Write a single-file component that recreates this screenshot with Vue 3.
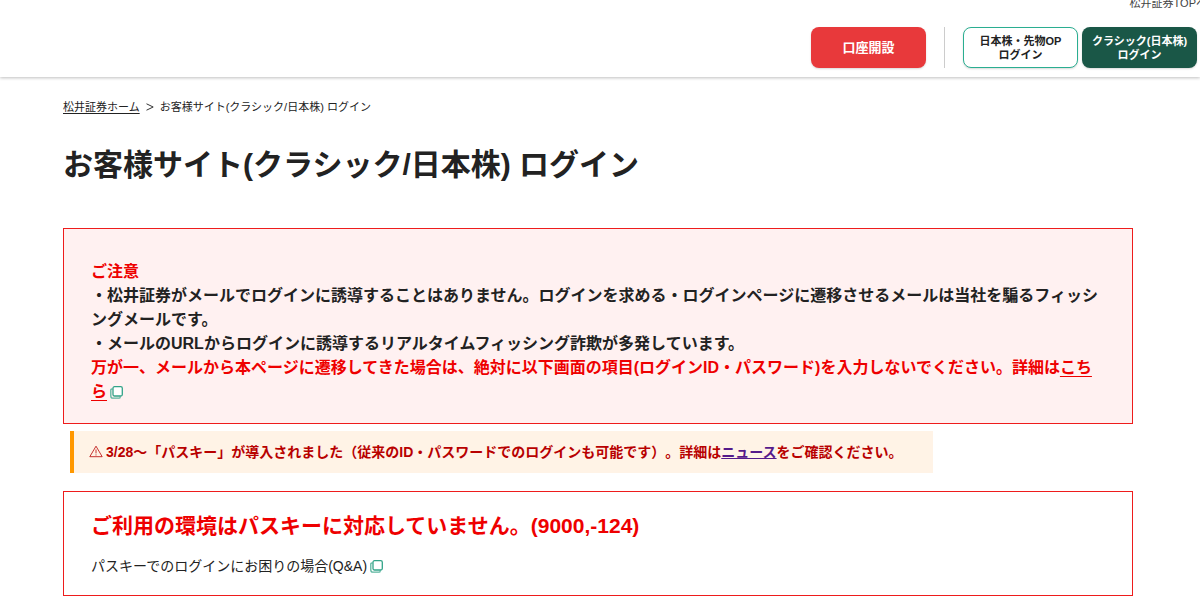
<script setup>
const notices = [
  '・松井証券がメールでログインに誘導することはありません。ログインを求める・ログインページに遷移させるメールは当社を騙るフィッシングメールです。',
  '・メールのURLからログインに誘導するリアルタイムフィッシング詐欺が多発しています。'
]
</script>

<template>
  <div class="page">
    <header class="header">
      <a class="top-link" href="#">松井証券TOPへ</a>
      <nav class="actions">
        <button type="button" class="btn open">口座開設</button>
        <span class="divider"></span>
        <button type="button" class="btn stock">日本株・先物OP<br />ログイン</button>
        <button type="button" class="btn classic">クラシック(日本株)<br />ログイン</button>
      </nav>
    </header>

    <main class="main">
      <nav class="crumbs">
        <a href="#">松井証券ホーム</a>
        <svg class="chevron" viewBox="0 0 8 8" aria-hidden="true"><path d="M0.5 0.8 7.2 4 0.5 7.2" /></svg>
        <span>お客様サイト(クラシック/日本株) ログイン</span>
      </nav>

      <h1>お客様サイト(クラシック/日本株) ログイン</h1>

      <section class="notice">
        <p class="red">ご注意</p>
        <p v-for="text in notices" :key="text">{{ text }}</p>
        <p class="red">万が一、メールから本ページに遷移してきた場合は、絶対に以下画面の項目(ログインID・パスワード)を入力しないでください。詳細は<a href="#">こちら</a><svg class="window notice-window" viewBox="0 0 13 13" aria-hidden="true"><path class="back" d="M2.5 3H2Q.8 3 .8 4.2V10Q.8 12.2 3 12.2H9Q10.2 12.2 10.2 11V10.5" /><rect x="3" y=".7" width="9.3" height="9.3" rx="1.5" /></svg></p>
      </section>

      <p class="news"><svg class="warn" viewBox="0 0 14 13" aria-hidden="true"><path d="M7 1.2 13.2 11.7H.8ZM7 4.5V8.4M7 9.4V10.5" /></svg>3/28～「パスキー」が導入されました（従来のID・パスワードでのログインも可能です）。詳細は<a href="#">ニュース</a>をご確認ください。</p>

      <section class="error">
        <h2>ご利用の環境はパスキーに対応していません。(9000,-124)</h2>
        <a class="help" href="#">パスキーでのログインにお困りの場合(Q&amp;A)<svg class="window" viewBox="0 0 13 13" aria-hidden="true"><path class="back" d="M2.5 3H2Q.8 3 .8 4.2V10Q.8 12.2 3 12.2H9Q10.2 12.2 10.2 11V10.5" /><rect x="3" y=".7" width="9.3" height="9.3" rx="1.5" /></svg></a>
      </section>
    </main>
  </div>
</template>

<style>
body {
  background: #fff;
}
</style>

<style scoped>
.page {
  overflow: hidden;
  color: #222;
  font-family: "Liberation Sans", "Noto Sans CJK JP", sans-serif;
  text-spacing-trim: space-all;
}
p, h1, h2 {
  margin: 0;
}
.header {
  display: flex;
  flex-direction: column;
  align-items: flex-end;
  gap: 20px;
  padding-bottom: 9px;
  box-shadow: 0 1px 3px rgba(0, 0, 0, 0.25);
}
.top-link {
  margin-right: -7px;
  color: #444;
  font-size: 11px;
  line-height: 7px;
  text-decoration: none;
  white-space: nowrap;
}
.actions {
  display: flex;
  align-items: center;
  gap: 4px;
  padding-right: 3px;
}
.btn {
  width: 115px;
  height: 41px;
  padding: 0;
  border: 0;
  border-radius: 8px;
  font-family: inherit;
  font-size: 11px;
  font-weight: 700;
  line-height: 14px;
  color: #fff;
  white-space: nowrap;
  box-shadow: 0 1px 2px rgba(0, 0, 0, 0.15);
}
.open {
  background: #e8393b;
  font-size: 13px;
}
.divider {
  width: 1px;
  height: 41px;
  margin: 0 14px;
  background: #ccc;
}
.stock {
  border: 1px solid #2aae91;
  background: #fff;
  color: #222;
}
.classic {
  background: #1a5747;
}
.main {
  padding: 22px 67px 16px 63px;
}
.crumbs {
  display: flex;
  align-items: center;
  gap: 6px;
  font-size: 11px;
  line-height: 16px;
}
.crumbs a {
  color: inherit;
  text-underline-offset: 2px;
}
.chevron {
  width: 8px;
  height: 8px;
  fill: none;
  stroke: #333;
}
h1 {
  margin-top: 30px;
  font-size: 30px;
  line-height: 40px;
}
.notice {
  margin-top: 43px;
  padding: 31px 26px 19px 27px;
  border: 1px solid #ee1c1c;
  background: #fff1f1;
  font-size: 16px;
  font-weight: 700;
  line-height: 24px;
}
.red {
  color: #e00;
}
.red a {
  color: inherit;
  text-underline-offset: 3px;
}
.window {
  width: 13px;
  height: 13px;
  margin-left: 3px;
  vertical-align: -2px;
  fill: none;
  stroke: #32a388;
  stroke-width: 1.3;
}
.notice-window rect {
  fill: #fff;
}
.window .back {
  stroke: #5bb59f;
}
.news {
  width: fit-content;
  margin: 7px 0 0 7px;
  padding: 10px 30px 10px 15px;
  border-left: 4px solid #ff9800;
  background: #fff3e6;
  color: #b80000;
  font-size: 14px;
  font-weight: 700;
  line-height: 22px;
}
.news a {
  color: #551a8b;
}
.warn {
  width: 14px;
  height: 13px;
  margin-right: 3px;
  vertical-align: -1px;
  fill: none;
  stroke: #b80000;
  stroke-width: 0.8;
}
.error {
  margin-top: 18px;
  padding: 18px 27px 17px;
  border: 1px solid #ee1c1c;
}
h2 {
  color: #e00;
  font-size: 21px;
  line-height: 32px;
}
.help {
  display: block;
  margin-top: 12px;
  color: #222;
  font-size: 14px;
  line-height: 24px;
  text-decoration: none;
}
</style>
